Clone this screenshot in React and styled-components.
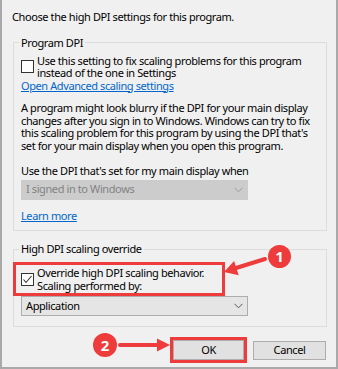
import React from 'react'
import styled, { createGlobalStyle } from 'styled-components'

const Global = createGlobalStyle`
  html, body { margin: 0; padding: 0; background: #f0f0f0; }
  body { font-family: "Noto Sans", "Open Sans", sans-serif; }
`

const red = '#ee3b3b'

const Dialog = styled.div`
  position: relative;
  box-sizing: border-box;
  width: 338px;
  height: 369px;
  overflow: hidden;
  background: #f0f0f0;
  border: 2px solid #a9a9a9;
  border-top: none;
  padding: 11px 9px 0 11px;
  font-size: 11px;
  letter-spacing: -0.4px;
  line-height: 12.5px;
  color: #000;
  white-space: nowrap;
`

const Title = styled.div`
  margin-left: -1px;
`

const Group = styled.fieldset`
  margin: ${p => p.$top}px 0 0 0;
  padding: 5.5px 7px ${p => p.$bottom}px 7px;
  border: 1px solid #dcdcdc;
  min-width: 0;
`

const Legend = styled.legend`
  padding: 0 2px;
  margin-left: -2px;
`

const CheckRow = styled.label`
  display: flex;
  align-items: flex-start;
  gap: 3px;
`

const Box = styled.span`
  flex: none;
  box-sizing: border-box;
  width: 13px;
  height: 13px;
  margin-top: ${p => p.$top}px;
  border: 1px solid #333;
  background: #fff;
  display: flex;
  align-items: center;
  justify-content: center;
`

const Link = styled.a`
  display: block;
  width: max-content;
  color: #0066cc;
  text-decoration: underline;
  margin-top: ${p => p.$top || 0}px;
`

const Para = styled.p`
  margin: ${p => p.$top}px 0 0 0;
`

const Select = styled.div`
  box-sizing: border-box;
  width: 227px;
  height: 20px;
  margin-top: ${p => p.$top}px;
  display: flex;
  align-items: center;
  justify-content: space-between;
  padding: 0 4px 0 4px;
  border: 1px solid ${p => (p.$disabled ? '#cccccc' : '#adadad')};
  background: ${p => (p.$disabled ? '#cccccc' : '#e5e5e5')};
  color: ${p => (p.$disabled ? '#838383' : '#000')};
`

const Highlight = styled.div`
  width: 201px;
  margin: 1px 0 0 -8px;
  padding: 2px 0 1px 5px;
  border: 3px solid ${red};
`

const Buttons = styled.div`
  display: flex;
  justify-content: flex-end;
  align-items: center;
  gap: 6px;
  margin: 10px 1px 0 0;
`

const ButtonFrame = styled.div`
  border: 3px solid ${red};
`

const Button = styled.div`
  box-sizing: border-box;
  width: ${p => p.$w}px;
  height: ${p => p.$h}px;
  display: flex;
  align-items: center;
  justify-content: center;
  background: #e1e1e1;
  border: 1px solid #adadad;
`

const Badge = styled.div`
  position: absolute;
  left: ${p => p.$x}px;
  top: ${p => p.$y}px;
  width: ${p => p.$d}px;
  height: ${p => p.$d}px;
  border-radius: 50%;
  background: ${red};
  color: #fff;
  font-size: 15px;
  font-weight: 700;
  letter-spacing: 0;
  display: flex;
  align-items: center;
  justify-content: center;
  line-height: 1;
`

const Arrow = styled.svg`
  position: absolute;
  left: ${p => p.$x}px;
  top: ${p => p.$y}px;
  overflow: visible;
`

const Chevron = ({ color }) => (
  <svg width="9" height="6" viewBox="0 0 9 6">
    <polyline points="0.5,0.8 4.5,4.8 8.5,0.8" fill="none" stroke={color} strokeWidth="1" />
  </svg>
)

const Check = () => (
  <svg width="11" height="11" viewBox="0 0 11 11">
    <polyline points="1.5,5.5 4,8.5 9.5,2" fill="none" stroke="#333" strokeWidth="1.1" />
  </svg>
)

export default function App() {
  return (
    <>
      <Global />
      <Dialog>
        <Title>Choose the high DPI settings for this program.</Title>

        <Group $top={13} $bottom={7}>
          <Legend>Program DPI</Legend>
          <CheckRow>
            <Box $top={5} />
            <span>
              Use this setting to fix scaling problems for this program
              <br />
              instead of the one in Settings
            </span>
          </CheckRow>
          <Link>Open Advanced scaling settings</Link>
          <Para $top={10}>
            A program might look blurry if the DPI for your main display
            <br />
            changes after you sign in to Windows. Windows can try to fix
            <br />
            this scaling problem for this program by using the DPI that's
            <br />
            set for your main display when you open this program.
          </Para>
          <Para $top={12.5}>Use the DPI that's set for my main display when</Para>
          <Select $top={2.5} $disabled>
            <span>I signed in to Windows</span>
            <Chevron color="#9a9a9a" />
          </Select>
          <Link $top={10.5}>Learn more</Link>
        </Group>

        <Group $top={12.5} $bottom={10}>
          <Legend>High DPI scaling override</Legend>
          <Highlight>
            <CheckRow>
              <Box $top={6}>
                <Check />
              </Box>
              <span>
                Override high DPI scaling behavior.
                <br />
                Scaling performed by:
              </span>
            </CheckRow>
          </Highlight>
          <Select $top={0}>
            <span>Application</span>
            <Chevron color="#555" />
          </Select>
        </Group>

        <Buttons>
          <ButtonFrame>
            <Button $w={71} $h={20}>OK</Button>
          </ButtonFrame>
          <Button $w={73} $h={19}>Cancel</Button>
        </Buttons>

        <Arrow $x={213} $y={250} width="55" height="32" viewBox="0 0 55 32">
          <line x1="50" y1="9" x2="21" y2="18" stroke={red} strokeWidth="4" strokeLinecap="round" />
          <polygon points="9,22 23.7,25.3 19.1,11" fill={red} />
        </Arrow>
        <Badge $x={266} $y={245} $d={23}>1</Badge>

        <Arrow $x={112} $y={337} width="58" height="16" viewBox="0 0 58 16">
          <line x1="6" y1="8" x2="46" y2="8" stroke={red} strokeWidth="4" strokeLinecap="round" />
          <polygon points="56,8 43,1.5 43,14.5" fill={red} />
        </Arrow>
        <Badge $x={91} $y={333} $d={24}>2</Badge>
      </Dialog>
    </>
  )
}
